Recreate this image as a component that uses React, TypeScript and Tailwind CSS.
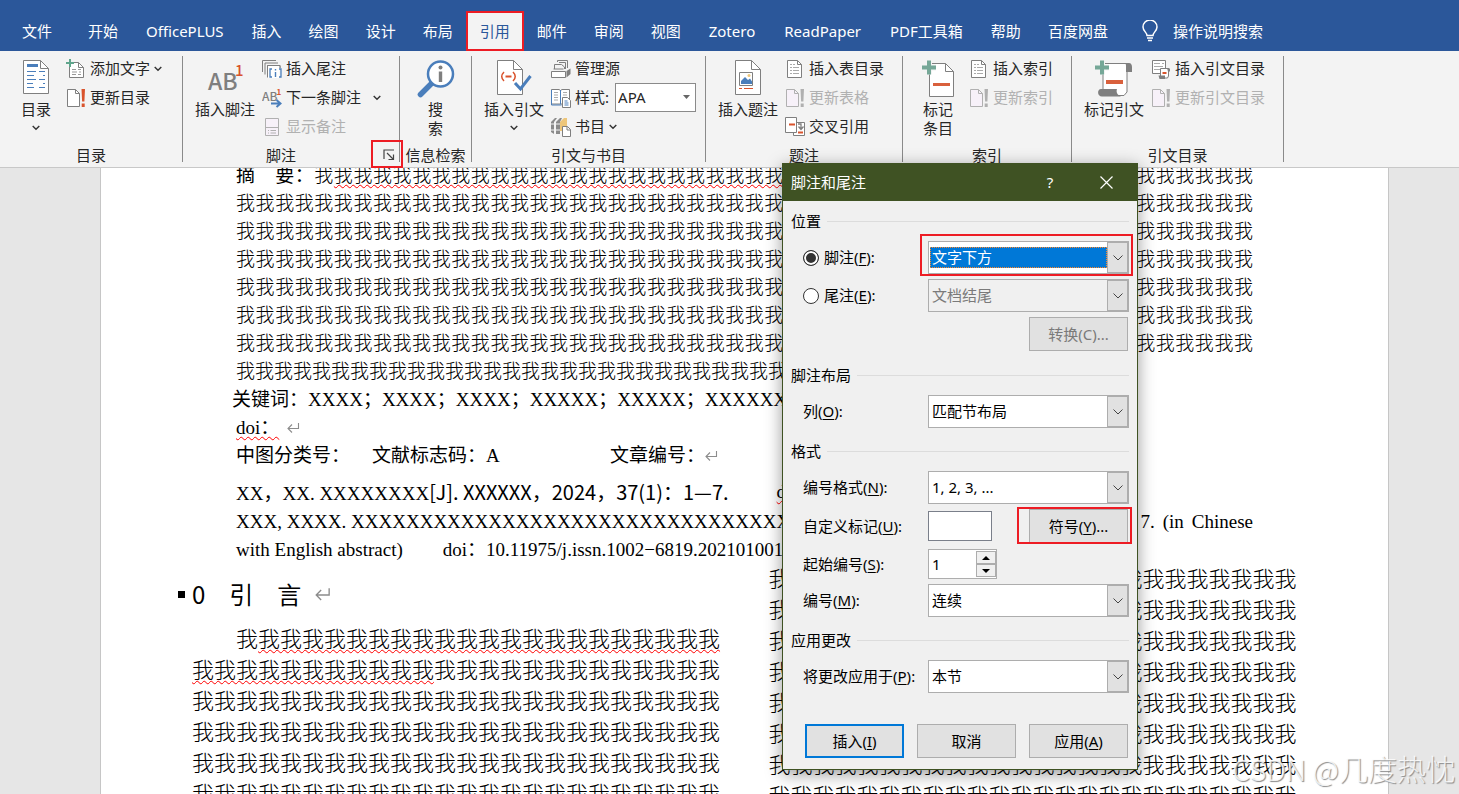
import { useState } from "react"
import type { ReactNode } from "react"

const UI_FONT = "font-['Noto_Sans','Noto_Sans_CJK_SC',sans-serif]"
const DOC_FONT = "font-['Liberation_Serif','Noto_Sans_CJK_SC',serif]"

const wo = (n: number) => "我".repeat(n)

const SQUIGGLE = "underline decoration-wavy decoration-[#ff0000] decoration-1 underline-offset-2"

/* ---------- icons ---------- */

function Chevron({ className = "" }: { className?: string }) {
  return (
    <svg width="8" height="6" viewBox="0 0 8 6" className={className} fill="none" stroke="#333" strokeWidth="1.4">
      <path d="M.7 1 4 4.3 7.3 1" />
    </svg>
  )
}

function ReturnMark({ className = "w-[13px]" }: { className?: string }) {
  return (
    <svg viewBox="0 0 13 12" className={className} fill="none" stroke="#8c8c8c" strokeWidth="1.1">
      <path d="M11.5 1v5.5H1M5 2.5 1 6.5l4 4" />
    </svg>
  )
}

function TocIcon() {
  return (
    <svg width="26" height="36" viewBox="0 0 26 36" fill="none">
      <path d="M.5.5h17l8 8v25H.5z" fill="#fff" stroke="#7f7f7f" />
      <path d="M17.5.5v8h8" stroke="#7f7f7f" />
      <path d="M4 4h11v3H4z" fill="#4a7ebb" />
      <path d="M4 11.5h9M4 15.5h7M4 19.5h9M4 23.5h6M4 27.5h7M16 11.5h6M20 15.5h2M16 19.5h6M20 23.5h2M16 27.5h6" stroke="#4a7ebb" />
    </svg>
  )
}

function AddTextIcon() {
  return (
    <svg width="20" height="20" viewBox="0 0 20 20" fill="none">
      <path d="M3.500 3.500h9l5 5v10h-14z" fill="#fff" stroke="#7f7f7f" />
      <path d="M12.500 3.500v5h5" stroke="#7f7f7f" />
      <path d="M6 10.500h4M6 13h5M6 15.500h4M12 10.500h3M13 13h2M12 15.500h3" stroke="#999" />
      <path d="M0 4h8M4 0v8" stroke="#5fa58c" strokeWidth="2" />
    </svg>
  )
}

function UpdateIcon({ disabled = false }: { disabled?: boolean }) {
  const line = disabled ? "#b0b0b0" : "#7f7f7f"
  return (
    <svg width="20" height="20" viewBox="0 0 20 20" fill="none">
      <path d="M1.500 1.500h8l4 4v13h-12z" fill={disabled ? "#f7f1f9" : "#fff"} stroke={line} />
      <path d="M9.500 1.500v4h4" stroke={line} />
      <path d="M15.500 1h3.500l-.6 12.500h-2.300zM15.700 15.500h3V19h-3z" fill={disabled ? "#b0b0b0" : "#d9532c"} />
    </svg>
  )
}

function FootnoteIcon() {
  return (
    <svg width="38" height="36" viewBox="0 0 38 36" className="font-['Noto_Sans_CJK_SC',sans-serif]">
      <text x="2" y="30" fontSize="23" fontWeight="500" fill="#7f7f7f">AB</text>
      <text x="29" y="16" fontSize="15" fontWeight="500" fill="#d9532c">1</text>
    </svg>
  )
}

function EndnoteIcon() {
  return (
    <svg width="20" height="20" viewBox="0 0 20 20" fill="none">
      <path d="M.5 13V1.500H14M3 15.500V4h13M5.500 18V6.500H18V9" stroke="#7f7f7f" />
      <path d="M6 7h11.500v12H6z" fill="#fff" />
      <path d="M5.500 18.500V6.500H18V9" stroke="#7f7f7f" />
      <path d="M10 10H8v8h2M17 10h2v8h-2" stroke="#4a7ebb" strokeWidth="1.300" />
      <path d="M13.500 10v1.500M13.500 13v5" stroke="#4a7ebb" strokeWidth="1.400" />
    </svg>
  )
}

function NextFootnoteIcon() {
  return (
    <svg width="20" height="20" viewBox="0 0 20 20" className="font-['Noto_Sans_CJK_SC',sans-serif]">
      <text x="0" y="13" fontSize="12" fontWeight="500" fill="#7f7f7f">AB</text>
      <text x="14.500" y="7" fontSize="8" fontWeight="700" fill="#d9532c">1</text>
      <path d="M9 15.500h9M14.500 12l4 3.500-4 3.500" fill="none" stroke="#4a7ebb" strokeWidth="2" />
    </svg>
  )
}

function ShowNotesIcon() {
  return (
    <svg width="20" height="20" viewBox="0 0 20 20" fill="none" stroke="#b0b0b0">
      <path d="M3.500 1.500h13v17h-13z" fill="#f7f1f9" />
      <path d="M3.500 10.500h13M6 13.500h1M8.500 13.500H14M6 16h1M8.500 16H14" />
    </svg>
  )
}

function SearchInfoIcon() {
  return (
    <svg width="38" height="38" viewBox="0 0 38 38" fill="none">
      <path d="M15 23 3.500 34.500" stroke="#4a7ebb" strokeWidth="5.500" strokeLinecap="round" />
      <circle cx="23.500" cy="14" r="12.500" fill="#fff" stroke="#4a7ebb" strokeWidth="2.500" />
      <circle cx="23.500" cy="7.500" r="2" fill="#7f7f7f" />
      <path d="M23.500 11.500V22" stroke="#7f7f7f" strokeWidth="3.400" />
    </svg>
  )
}

function CitationIcon() {
  return (
    <svg width="36" height="36" viewBox="0 0 36 36" fill="none">
      <path d="M1.500.500h16l9 9v25h-25z" fill="#fff" stroke="#7f7f7f" />
      <path d="M17.500.500v9h9" stroke="#7f7f7f" />
      <path d="M8 12c-3 3-3 6 0 9M17 12c3 3 3 6 0 9" stroke="#d9532c" strokeWidth="1.500" />
      <path d="M9.500 16.500h6" stroke="#d9532c" strokeWidth="2" />
      <path d="m19 23 5.500 6 10-13" stroke="#4a7ebb" strokeWidth="3" />
    </svg>
  )
}

function ManageSourceIcon() {
  return (
    <svg width="20" height="20" viewBox="0 0 20 20" fill="none">
      <path d="M6.500 3V1.500h10V9M3.500 10V5.500h7l3 2.500v2" stroke="#7f7f7f" />
      <path d="M8 3.500h6.500V10" stroke="#7f7f7f" />
      <path d="M.5 12.500h14v6H.5z" fill="#fff" stroke="#7f7f7f" />
      <path d="m15.500 12 4-2.500V15l-4 3.500z" fill="#7f7f7f" />
      <path d="M2.500 10h10" stroke="#7f7f7f" />
    </svg>
  )
}

function StyleIcon() {
  return (
    <svg width="20" height="20" viewBox="0 0 20 20" fill="none">
      <path d="M.5 1.500H8l1.500 1 1.500-1h7.500V16H.5z" fill="#fff" stroke="#7f7f7f" />
      <path d="M.5 2v15h10M9.500 2v14" stroke="#4a7ebb" />
      <path d="M3 4.500h4M3 7h4M3 9.500h4M3 12h4M12 4.500h4M12 7h4" stroke="#aaa" />
      <path d="M11.500 9.500h5l3 3v7h-8z" fill="#fff" stroke="#7f7f7f" />
      <path d="M13.500 13h3M13.500 15h4M13.500 17h4" stroke="#4a7ebb" />
    </svg>
  )
}

function BibliographyIcon() {
  return (
    <svg width="20" height="20" viewBox="0 0 20 20" fill="none">
      <path d="m0 5 4-4h2L3 5v12l-3-2zM5 5l4-4h2L9 5v12H5z" fill="#8a8a8a" />
      <path d="M5 7h4M5 13h4M0 7h3M0 13h3" stroke="#f3f3f3" />
      <path d="m9 5 4-4h3v13H9z" fill="#edc67b" />
      <path d="M11.500 9.500h5l3 3v7h-8z" fill="#fff" stroke="#7f7f7f" />
      <path d="M16 9.500v3.500h3.500" stroke="#7f7f7f" />
    </svg>
  )
}

function CaptionIcon() {
  return (
    <svg width="28" height="36" viewBox="0 0 28 36" fill="none">
      <path d="M1.500.500h16l9 9v25h-25z" fill="#fff" stroke="#7f7f7f" />
      <path d="M17.500.500v9h9" stroke="#7f7f7f" />
      <path d="M5.500 12.500h13v13h-13z" stroke="#7f7f7f" />
      <path d="m7 24 0-3 4-4 3 3 2-1.500 2 3V24z" fill="#4a7ebb" />
      <circle cx="15" cy="15.500" r="1.500" fill="#edc67b" />
      <path d="M5 28.500h3M10 28.500h9" stroke="#d9532c" />
    </svg>
  )
}

function PageLinesIcon() {
  return (
    <svg width="20" height="20" viewBox="0 0 20 20" fill="none" stroke="#7f7f7f">
      <path d="M2.500 1.500h10l4 4v13h-14z" fill="#fff" />
      <path d="M12.500 1.500v4h4" />
      <path d="M5 5.500h5M5 8.500h9M5 11.500h9M5 14.500h9" stroke="#aaa" strokeDasharray="2 1 6 1" />
    </svg>
  )
}

function CrossRefIcon() {
  return (
    <svg width="20" height="20" viewBox="0 0 20 20" fill="none">
      <path d="M8.500 5.500h11v13h-11z" fill="#fff" stroke="#7f7f7f" />
      <path d="M.5.500h11v15H.5z" fill="#fff" stroke="#7f7f7f" />
      <path d="M4 7.500h6M13 15.500h5" stroke="#d9532c" strokeWidth="2" />
      <path d="M13 7h3v5M13.500 9.500l2.500 3 2.500-3" stroke="#7f7f7f" strokeWidth="1.300" />
    </svg>
  )
}

function MarkEntryIcon() {
  return (
    <svg width="32" height="38" viewBox="0 0 32 38" fill="none">
      <path d="M7.500 3.500h16l8 8v25h-24z" fill="#fff" stroke="#7f7f7f" />
      <path d="M23.500 3.500v8h8" stroke="#7f7f7f" />
      <path d="M11 24.500h17" stroke="#d9603c" strokeWidth="3" />
      <path d="M0 7.500h14M7 .5v14" stroke="#f3f3f3" strokeWidth="6" />
      <path d="M0 7.500h14M7 .5v14" stroke="#75a797" strokeWidth="4" />
    </svg>
  )
}

function MarkCitationIcon() {
  return (
    <svg width="38" height="38" viewBox="0 0 38 38" fill="none">
      <path d="M8 3.500h24V32l-3 3.500H8z" fill="#fff" stroke="#7f7f7f" />
      <path d="M30 3h4c2 0 3 2 3 4v5h-6V7c0-2 0-3-1-4zM6 29h16c-1 3 0 6 4 7.500H7c-5 0-5-7.500-1-7.500z" fill="#7f7f7f" />
      <path d="M11 22h17" stroke="#d9603c" strokeWidth="4" />
      <path d="M0 7.500h14M7 .5v14" stroke="#f3f3f3" strokeWidth="6" />
      <path d="M0 7.500h14M7 .5v14" stroke="#75a797" strokeWidth="4" />
    </svg>
  )
}

function InsertAuthoritiesIcon() {
  return (
    <svg width="20" height="20" viewBox="0 0 20 20" fill="none">
      <path d="M1.500 1.500h13v13h-13z" fill="#fff" stroke="#7f7f7f" />
      <path d="M3 4.500h6M3 7.500h9M3 10.500h6M11 4.500h2" stroke="#aaa" />
      <path d="M9.500 9.500h8V17l-1 2h-7z" fill="#fff" stroke="#7f7f7f" />
      <path d="M16 9h2l1 1v2.500h-2zM7.500 16.500H14V20H8.500z" fill="#7f7f7f" />
      <path d="M11.500 14h4" stroke="#d9532c" strokeWidth="2" />
    </svg>
  )
}

function BulbIcon() {
  return (
    <svg width="16" height="22" viewBox="0 0 16 22" fill="none" stroke="#fff" strokeWidth="1.500">
      <path d="M5 15.500c0-3-4-4.500-4-8.500a7 7 0 0 1 14 0c0 4-4 5.500-4 8.500zM5 18h6M6 20.500h4" />
    </svg>
  )
}

/* ---------- ribbon ---------- */

const tabs = ["开始", "OfficePLUS", "插入", "绘图", "设计", "布局", "引用", "邮件", "审阅", "视图", "Zotero", "ReadPaper", "PDF工具箱", "帮助", "百度网盘"]

function TabBar() {
  const [active, setActive] = useState("引用")
  return (
    <nav className="flex h-[51px] shrink-0 items-end gap-px bg-[#2b579a] pl-[9px] text-[15px] whitespace-nowrap text-white">
      <button className="mr-[9px] h-10 px-[13px]">文件</button>
      {tabs.map((tab) => (
        <button
          key={tab}
          onClick={() => setActive(tab)}
          className={`relative h-10 ${/^[A-Z]/.test(tab) ? "px-3.5" : "px-[13px]"} ${tab === active ? "bg-[#f3f3f3] text-[#2b579a]" : ""}`}
        >
          {tab}
          {tab === "引用" && <span className="absolute -inset-x-px inset-y-0 border-2 border-[#ed1c24]" />}
        </button>
      ))}
      <button className="ml-5 flex h-10 items-center gap-[15px]">
        <BulbIcon />
        操作说明搜索
      </button>
    </nav>
  )
}

function BigButton({ icon, lines, chevron = false }: { icon: ReactNode; lines: string[]; chevron?: boolean }) {
  return (
    <button className="flex flex-col items-center pt-1 whitespace-nowrap">
      <span className="flex h-10 items-start justify-center">{icon}</span>
      {lines.map((line) => (
        <span key={line} className="leading-[19px]">{line}</span>
      ))}
      {chevron && <Chevron className="mt-1.5" />}
    </button>
  )
}

function SmallButton({ icon, label, chevron = false, disabled = false }: { icon: ReactNode; label: string; chevron?: boolean; disabled?: boolean }) {
  return (
    <button disabled={disabled} className="flex h-[25px] items-center gap-1 whitespace-nowrap disabled:text-[#b1b1b1]">
      {icon}
      {label}
      {chevron && <Chevron />}
    </button>
  )
}

function Group({ title, className, launcher, children }: { title: string; className: string; launcher?: ReactNode; children: ReactNode }) {
  return (
    <section className={`flex shrink-0 flex-col justify-between border-r border-[#8a8a8a] ${className}`}>
      <div className="flex items-start gap-[7px]">{children}</div>
      <div className="flex">
        <h2 className="flex-1 text-center leading-[14px] whitespace-nowrap">{title}</h2>
        {launcher}
      </div>
    </section>
  )
}

function Column({ children }: { children: ReactNode }) {
  return <div className="flex flex-col gap-1">{children}</div>
}

function Launcher() {
  return (
    <button aria-label="脚注和尾注" className="relative flex w-5 items-center">
      <svg width="12" height="12" viewBox="0 0 12 12" fill="none" stroke="#444" strokeWidth="1.200" className="ml-1">
        <path d="M1 10V1h10M4 4l6.500 6.500M10.500 5.500v5h-5" />
      </svg>
      <span className="absolute -top-2 -right-1 -bottom-1.5 -left-2 border-2 border-[#ed1c24]" />
    </button>
  )
}

function Ribbon() {
  return (
    <div className="flex shrink-0 border-b border-[#c8c8c8] bg-[#f3f3f3] py-[5px] text-[15px] text-[#262626]">
      <div className="flex h-[106px]">
        <Group title="目录" className="w-[183px] [&>div:first-child]:gap-[15px] [&>div:first-child]:pl-[21px]">
          <BigButton icon={<TocIcon />} lines={["目录"]} chevron />
          <Column>
            <SmallButton icon={<AddTextIcon />} label="添加文字" chevron />
            <SmallButton icon={<UpdateIcon />} label="更新目录" />
          </Column>
        </Group>
        <Group title="脚注" className="w-[217px] [&>div:first-child]:pl-3" launcher={<Launcher />}>
          <BigButton icon={<FootnoteIcon />} lines={["插入脚注"]} />
          <Column>
            <SmallButton icon={<EndnoteIcon />} label="插入尾注" />
            <div className="flex items-center gap-3">
              <SmallButton icon={<NextFootnoteIcon />} label="下一条脚注" />
              <button aria-label="下一条脚注选项"><Chevron /></button>
            </div>
            <SmallButton icon={<ShowNotesIcon />} label="显示备注" disabled />
          </Column>
        </Group>
        <Group title="信息检索" className="w-[72px] [&>div:first-child]:justify-center">
          <BigButton icon={<SearchInfoIcon />} lines={["搜", "索"]} />
        </Group>
        <Group title="引文与书目" className="w-[234px] [&>div:first-child]:pl-3">
          <BigButton icon={<CitationIcon />} lines={["插入引文"]} chevron />
          <Column>
            <SmallButton icon={<ManageSourceIcon />} label="管理源" />
            <div className="flex h-[25px] items-center gap-1">
              <StyleIcon />
              <label htmlFor="cite-style" className="whitespace-nowrap">样式:</label>
              <div className="relative ml-0.5">
                <select id="cite-style" className="h-[29px] w-[81px] appearance-none border border-[#8a8a8a] bg-white pl-0.5">
                  <option>APA</option>
                </select>
                <svg width="7" height="4" viewBox="0 0 7 4" className="pointer-events-none absolute top-3 right-1.5">
                  <path d="M0 0h7L3.500 4z" fill="#666" />
                </svg>
              </div>
            </div>
            <SmallButton icon={<BibliographyIcon />} label="书目" chevron />
          </Column>
        </Group>
        <Group title="题注" className="w-[197px] [&>div:first-child]:pl-3">
          <BigButton icon={<CaptionIcon />} lines={["插入题注"]} />
          <Column>
            <SmallButton icon={<PageLinesIcon />} label="插入表目录" />
            <SmallButton icon={<UpdateIcon disabled />} label="更新表格" disabled />
            <SmallButton icon={<CrossRefIcon />} label="交叉引用" />
          </Column>
        </Group>
        <Group title="索引" className="w-[169px] [&>div:first-child]:gap-[15px] [&>div:first-child]:pl-[19px]">
          <BigButton icon={<MarkEntryIcon />} lines={["标记", "条目"]} />
          <Column>
            <SmallButton icon={<PageLinesIcon />} label="插入索引" />
            <SmallButton icon={<UpdateIcon disabled />} label="更新索引" disabled />
          </Column>
        </Group>
        <Group title="引文目录" className="w-[212px] [&>div:first-child]:pl-3">
          <BigButton icon={<MarkCitationIcon />} lines={["标记引文"]} />
          <Column>
            <SmallButton icon={<InsertAuthoritiesIcon />} label="插入引文目录" />
            <SmallButton icon={<UpdateIcon disabled />} label="更新引文目录" disabled />
          </Column>
        </Group>
      </div>
    </div>
  )
}

/* ---------- document ---------- */

function Page() {
  return (
    <main className={`mr-[70px] ml-[100px] min-h-full border-x border-[#c6c6c6] bg-white px-[91px] text-black ${DOC_FONT}`}>
      <div className="-mt-1.5 px-11 text-[19px] leading-7 whitespace-nowrap">
        <div className="font-light [text-align-last:justify]">
          <p>
            <span className="font-normal">摘　要：</span>我<span className={SQUIGGLE}>{wo(28)}</span>{wo(19)}
          </p>
          {[1, 2, 3, 4, 5, 6].map((n) => (
            <p key={n}>{wo(52)}</p>
          ))}
        </div>
        <p className="font-light">{wo(29)}</p>
        <p className="-ml-1">关键词：XXXX；XXXX；XXXX；XXXXX；XXXXX；XXXXXX</p>
        <p className="flex items-center gap-2">
          <span className={SQUIGGLE}>doi：</span>
          <ReturnMark />
        </p>
        <p className="flex items-center">
          <span className="w-[136px]">中图分类号：</span>
          <span className="w-[238px]">文献标志码：A</span>
          <span>文章编号：</span>
          <ReturnMark />
        </p>
        <p className="mt-2 flex gap-12">
          <span>
            XX，XX. XXXXXXXX<span className="font-['Noto_Sans_CJK_SC',sans-serif] text-[20px]">[J]. XXXXXX，2024，37(1)：1—7.</span>
          </span>
          <span className={SQUIGGLE}>doi</span>
        </p>
        <p className="flex gap-2">
          <span className="flex-1">XXX, XXXX. {"X".repeat(36)}</span>
          <span>7.</span>
          <span>(in</span>
          <span>Chinese</span>
        </p>
        <p className="flex gap-10">
          <span>with English abstract)</span>
          <span>doi：10.11975/j.issn.1002−6819.202101001</span>
        </p>
      </div>

      <div className="grid grid-cols-2 gap-12 text-[22px] leading-[31px] font-light">
        <div>
          <h1 className="relative flex h-[60px] items-center gap-3.5 font-['Noto_Sans_CJK_SC',sans-serif] text-2xl font-normal">
            <span className="absolute -left-3.5 size-[7px] bg-black" />
            0　引　言
            <ReturnMark className="w-4" />
          </h1>
          <p className="indent-11 break-all">
            我<span className={SQUIGGLE}>{wo(32)}</span>{wo(13 + 24 * 4)}
          </p>
        </div>
        <p className="break-all">{wo(24 * 8)}</p>
      </div>
    </main>
  )
}

/* ---------- dialog ---------- */

function Heading({ children, className }: { children: string; className: string }) {
  return (
    <h3 className={`flex h-5 items-center gap-1.5 ${className}`}>
      {children}
      <span className="h-px flex-1 bg-[#dcdcdc]" />
    </h3>
  )
}

function Combo({ id, value, disabled = false, selected = false }: { id: string; value: string; disabled?: boolean; selected?: boolean }) {
  return (
    <div className={`relative flex h-[33px] w-[201px] items-center border border-[#adadad] ${disabled ? "bg-[#f0f0f0]" : "bg-white"}`}>
      <select
        id={id}
        disabled={disabled}
        className={
          selected
            ? "ml-px h-[21px] w-[177px] appearance-none border border-dotted border-[#ff8728] bg-[#0078d7] pl-px leading-none text-white"
            : "h-full w-full appearance-none pl-[3px] disabled:text-[#7a7a7a] disabled:opacity-100"
        }
      >
        <option>{value}</option>
      </select>
      <span className="pointer-events-none absolute inset-y-0 right-0 flex w-[21px] items-center justify-center border border-[#adadad] bg-[#e1e1e1]">
        <svg width="10" height="6" viewBox="0 0 10 6" fill="none" stroke="#444">
          <path d="m.5.500 4.500 4.500L9.500.500" />
        </svg>
      </span>
    </div>
  )
}

function KeyLabel({ id, text, hotkey, suffix = ":" }: { id: string; text: string; hotkey: string; suffix?: string }) {
  return (
    <label htmlFor={id}>
      {text}(<u className="underline-offset-2">{hotkey}</u>){suffix}
    </label>
  )
}

const BTN = "h-[34px] w-[99px] border border-[#adadad] bg-[#e1e1e1]"
const RADIO = "size-4 appearance-none rounded-full border border-[#333] bg-white checked:bg-[#333] checked:shadow-[inset_0_0_0_2px_#fff]"

function NotesDialog() {
  const [kind, setKind] = useState("foot")
  return (
    <div role="dialog" aria-label="脚注和尾注" className="absolute top-[163px] left-[782px] w-[356px] border border-[#3f5223] bg-[#f0f0f0] text-[15px] text-black shadow-[0_4px_16px_rgba(0,0,0,0.4)]">
      <div className="flex h-[37px] items-center bg-[#3f5223] pr-6 pl-2 text-white">
        <span className="flex-1">脚注和尾注</span>
        <button className="w-6" aria-label="帮助">?</button>
        <button className="ml-[38px]" aria-label="关闭">
          <svg width="13" height="13" viewBox="0 0 13 13" stroke="#fff" strokeWidth="1.200">
            <path d="m.5.500 12 12M12.500.500l-12 12" />
          </svg>
        </button>
      </div>
      <div className="pr-2 pb-[11px] pl-2">
        <Heading className="mt-2.5">位置</Heading>
        <div className="mt-2.5 flex items-center justify-between pl-3">
          <span className="flex items-center gap-[5px]">
            <input id="foot" type="radio" name="kind" checked={kind === "foot"} onChange={() => setKind("foot")} className={RADIO} />
            <KeyLabel id="foot" text="脚注" hotkey="F" />
          </span>
          <div className="relative">
            <Combo id="foot-pos" value="文字下方" selected />
            <span className="pointer-events-none absolute -top-[7px] -right-1 -bottom-0.5 -left-2 border-2 border-[#ed1c24]" />
          </div>
        </div>
        <div className="mt-[5px] flex items-center justify-between pl-3">
          <span className="flex items-center gap-[5px]">
            <input id="end" type="radio" name="kind" checked={kind === "end"} onChange={() => setKind("end")} className={RADIO} />
            <KeyLabel id="end" text="尾注" hotkey="E" />
          </span>
          <Combo id="end-pos" value="文档结尾" disabled />
        </div>
        <div className="mt-[5px] flex justify-end pr-px">
          <button disabled className={`${BTN} text-[#7a7a7a]`}>转换(C)...</button>
        </div>

        <Heading className="mt-3.5">脚注布局</Heading>
        <div className="mt-2.5 flex items-center justify-between pl-3">
          <KeyLabel id="cols" text="列" hotkey="O" />
          <Combo id="cols" value="匹配节布局" />
        </div>

        <Heading className="mt-[13px]">格式</Heading>
        <div className="mt-2.5 flex items-center justify-between pl-3">
          <KeyLabel id="fmt" text="编号格式" hotkey="N" />
          <Combo id="fmt" value="1, 2, 3, ..." />
        </div>
        <div className="mt-[5px] flex items-center pr-px pl-3">
          <span className="w-[125px]"><KeyLabel id="mark" text="自定义标记" hotkey="U" /></span>
          <input id="mark" className="h-[30px] w-16 border border-[#7a7f8a] bg-white px-1" />
          <div className="relative ml-auto">
            <button className={BTN}>符号(<u className="underline-offset-2">Y</u>)...</button>
            <span className="pointer-events-none absolute -top-0.5 -right-1 -bottom-px -left-3 border-2 border-[#ed1c24]" />
          </div>
        </div>
        <div className="mt-1.5 flex items-center pl-3">
          <span className="w-[125px]"><KeyLabel id="start" text="起始编号" hotkey="S" /></span>
          <div className="flex h-[30px] w-[69px] border border-[#adadad] bg-white">
            <input id="start" defaultValue="1" className="w-[47px] pl-[3px]" />
            <div className="flex w-5 flex-col py-px">
              <button aria-label="增加" className="flex flex-1 items-center justify-center border border-[#adadad] bg-[#f0f0f0]">
                <svg width="8" height="4" viewBox="0 0 8 4"><path d="M0 4h8L4 0z" /></svg>
              </button>
              <button aria-label="减少" className="flex flex-1 items-center justify-center border border-[#adadad] bg-[#f0f0f0]">
                <svg width="8" height="4" viewBox="0 0 8 4"><path d="M0 0h8L4 4z" /></svg>
              </button>
            </div>
          </div>
        </div>
        <div className="mt-[5px] flex items-center justify-between pl-3">
          <KeyLabel id="num" text="编号" hotkey="M" />
          <Combo id="num" value="连续" />
        </div>

        <Heading className="mt-[13px]">应用更改</Heading>
        <div className="mt-2.5 flex items-center justify-between pl-3">
          <KeyLabel id="apply" text="将更改应用于" hotkey="P" />
          <Combo id="apply" value="本节" />
        </div>

        <div className="mt-[31px] flex justify-between pr-px pl-3.5">
          <button className="h-[34px] w-[99px] border-2 border-[#0078d7] bg-[#e1e1e1]">插入(<u className="underline-offset-2">I</u>)</button>
          <button className={BTN}>取消</button>
          <button className={BTN}>应用(<u className="underline-offset-2">A</u>)</button>
        </div>
      </div>
    </div>
  )
}

export default function App() {
  return (
    <div className={`relative flex h-screen flex-col overflow-hidden ${UI_FONT}`}>
      <TabBar />
      <Ribbon />
      <div className="min-h-0 flex-1 overflow-hidden bg-[#e6e6e6]">
        <Page />
      </div>
      <NotesDialog />
      <span className="absolute right-1 bottom-1 font-['Noto_Sans_CJK_SC',sans-serif] text-[29px] leading-[44px] font-light text-white/80 [text-shadow:1px_1px_1px_#888]">
        CSDN @几度热忱
      </span>
    </div>
  )
}
